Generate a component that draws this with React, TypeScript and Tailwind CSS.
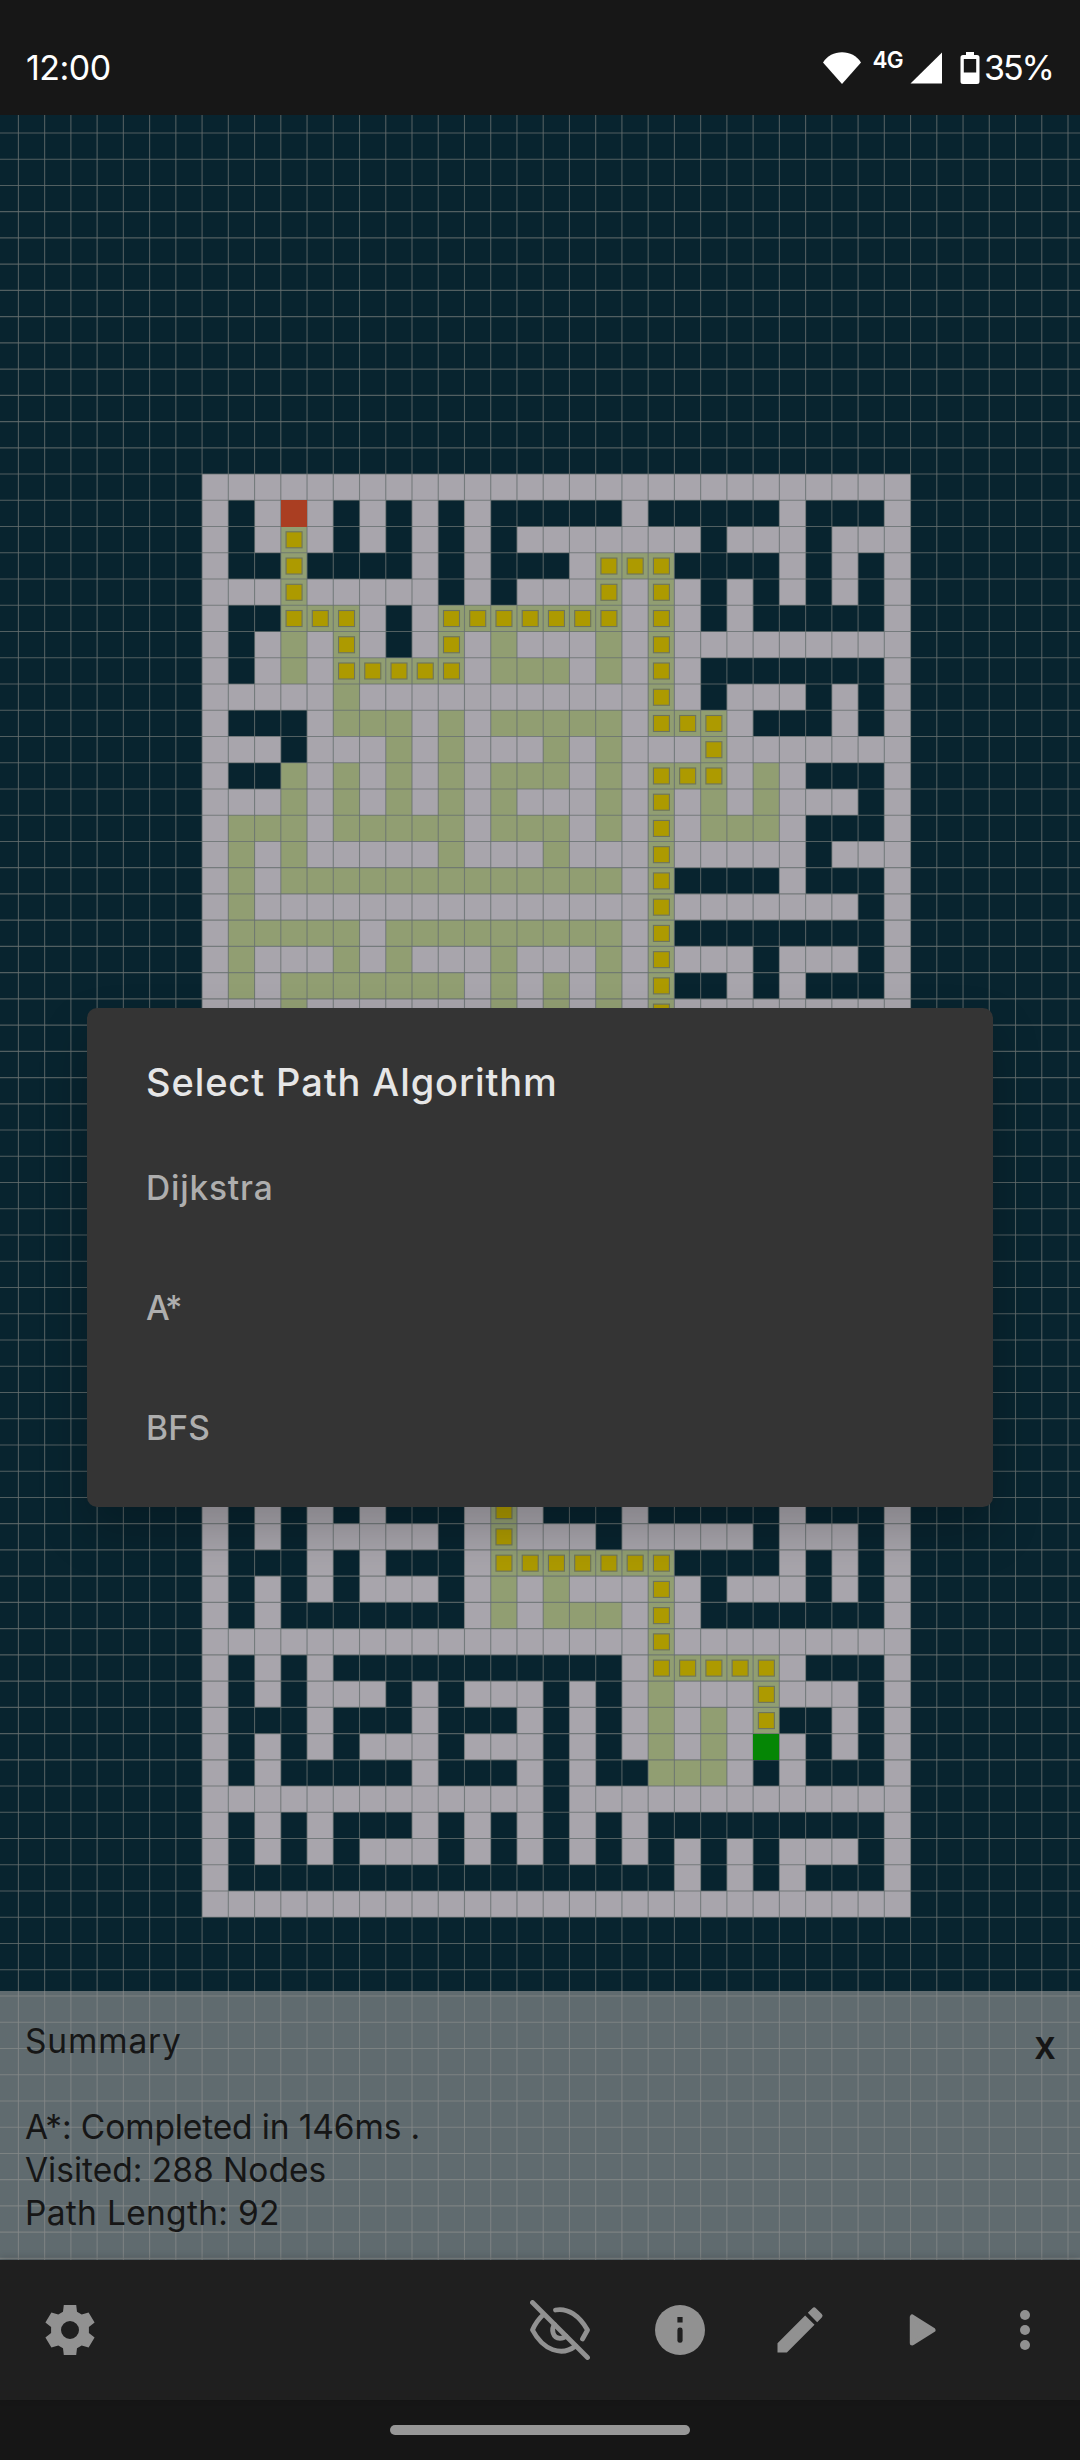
import { MdEdit } from "react-icons/md";

const CELL = 26.24;
const GRID_X = 18.4;
const GRID_Y = 132.95 - 115;
const MAZE_COL = 7;
const MAZE_ROW = 13;

// "#" wall, "." open, "g" visited, "p" path, "S" start, "E" end
const MAZE = [
  "###########################",
  "#.#S#.#.#.#.....#.....#...#",
  "#.#p#.#.#.#.#######.###.###",
  "#..p....#.#...#ppp....#.#.#",
  "###p#####.#.###p#p#.#.#.#.#",
  "#..ppp#.#ppppppp#p#.#.....#",
  "#.#g#p#.#p#g###g#p#########",
  "#.#g#ppppp#ggg#g#p#.......#",
  "#####g###########p#.###.#.#",
  "#...#ggg#g#ggggg#ppp#...#.#",
  "###.###g#g###g#g###p#######",
  "#..g#g#g#g#ggg#g#ppp#g#...#",
  "###g#g#g#g#g###g#p#g#g###.#",
  "#ggg#ggggg#ggg#g#p#ggg#...#",
  "#g#g#####g###g###p#####.###",
  "#g#ggggggggggggg#p....#...#",
  "#g###############p#######.#",
  "#ggggg#ggggggggg#p........#",
  "#g###g#g###g###g#p###.###.#",
  "#g#ggggggg#g#g#g#p..#.#...#",
  "###g#######g#g#g#p#########",
  ...Array<string>(18).fill("###########p###############"),
  "#.#.#.#...#p#...#.....#...#",
  "#.#.#####.#p###.#####.###.#",
  "#...#.#...#ppppppp....#.#.#",
  "#.#.#.###.#g#g###p#.###.#.#",
  "#.#.......#g#ggg#p#.......#",
  "#################p#########",
  "#.#.#...........#ppppp#...#",
  "#.#.###.#.###.#.#g###p###.#",
  "#...#...#...#.#.#g#g#p..#.#",
  "#.#.#.###.###.#.#g#g#E#.#.#",
  "#.#.....#...#.#..ggg#.#...#",
  "#############.#############",
  "#.#.#...#.#.#.#.#.........#",
  "#.#.#.###.#.#.#.#.#.#.###.#",
  "#.................#.#.#...#",
  "###########################",
];

const FILL: Record<string, string> = {
  "#": "#a8a5ac",
  g: "#919e72",
  p: "#919e72",
  S: "#aa3e22",
  E: "#058605",
};

const cells = MAZE.flatMap((row, r) =>
  [...row].map((kind, c) => ({
    kind,
    key: `${r}-${c}`,
    x: GRID_X + (MAZE_COL + c) * CELL,
    y: GRID_Y + (MAZE_ROW + r) * CELL,
  })),
).filter((cell) => cell.kind !== ".");

const isEndpoint = (kind: string) => kind === "S" || kind === "E";

function MazeCanvas() {
  return (
    <svg className="absolute inset-0 h-full w-full" viewBox="0 0 1080 2145">
      <g shapeRendering="crispEdges">
        {cells
          .filter((c) => !isEndpoint(c.kind))
          .map((c) => (
            <rect key={c.key} x={c.x} y={c.y} width={CELL} height={CELL} fill={FILL[c.kind]} />
          ))}
      </g>
      <g stroke="#667070" strokeOpacity={0.78} strokeWidth={1.1}>
        {Array.from({ length: 41 }, (_, i) => (
          <line key={`v${i}`} x1={GRID_X + i * CELL} x2={GRID_X + i * CELL} y1={0} y2={2145} />
        ))}
        {Array.from({ length: 82 }, (_, i) => (
          <line key={`h${i}`} x1={0} x2={1080} y1={GRID_Y + i * CELL} y2={GRID_Y + i * CELL} />
        ))}
      </g>
      <g fill="#ad9a00" stroke="#6d745f" strokeWidth={1.1}>
        {cells
          .filter((c) => c.kind === "p")
          .map((c) => (
            <rect key={c.key} x={c.x + CELL * 0.2} y={c.y + CELL * 0.2} width={CELL * 0.61} height={CELL * 0.61} />
          ))}
      </g>
      <g shapeRendering="crispEdges">
        {cells
          .filter((c) => isEndpoint(c.kind))
          .map((c) => (
            <rect key={c.key} x={c.x} y={c.y} width={CELL} height={CELL} fill={FILL[c.kind]} />
          ))}
      </g>
    </svg>
  );
}

function StatusBar() {
  return (
    <header className="flex h-[115px] shrink-0 items-center bg-[#171717] pt-[21px] pr-[27px] pl-[26px] text-[34px] leading-[40px] text-white">
      <span className="tracking-[-0.500px]">12:00</span>
      <svg className="ml-auto h-[34px] w-[40px]" viewBox="0 0 40 34" fill="#fff">
        <path d="M20 33 1 11.500C5.500 4.500 12 1.200 20 1.200S34.500 4.500 39 11.500Z" />
      </svg>
      <span className="-mt-[17px] ml-[10px] text-[22.500px] leading-[24px] font-semibold tracking-[-0.700px]">4G</span>
      <svg className="ml-[7px] h-[34px] w-[32px]" viewBox="0 0 32 34" fill="#fff">
        <path d="M32 1.500V32.500H.5Z" />
      </svg>
      <svg className="ml-[18px] h-[34px] w-[20px]" viewBox="0 0 20 34" fill="#fff" fillRule="evenodd">
        <path d="M6 1h8v3h3a2.500 2.500 0 0 1 2.500 2.500v24A2.500 2.500 0 0 1 17 33H3a2.500 2.500 0 0 1-2.500-2.500v-24A2.500 2.500 0 0 1 3 4h3ZM3.800 8v13.500h12.400V8Z" />
      </svg>
      <span className="ml-[4px] tracking-[-2px]">35%</span>
    </header>
  );
}

function Summary() {
  return (
    <section className="relative flex h-[269px] justify-between bg-[#989898]/61 pt-[29px] pr-[25px] pl-[25px] text-[33.500px] leading-[43px] text-[#161616]">
      <div className="flex flex-col">
        <h2 className="mb-[43px] tracking-[0.850px]">Summary</h2>
        <p className="tracking-[-0.120px]">A*: Completed in 146ms .</p>
        <p>Visited: 288 Nodes</p>
        <p className="tracking-[0.300px]">Path Length: 92</p>
      </div>
      <button className="mt-[6px] self-start font-['Noto_Sans',sans-serif] text-[30px] leading-[43px] font-bold">X</button>
    </section>
  );
}

function GearIcon() {
  return (
    <svg className="h-[60px] w-[60px]" viewBox="-30 -30 60 60" fill="currentColor" fillRule="evenodd">
      <path d="M-6.200-25H6.200L7-18.300 11.700-15.400 18.600-17.600 24.600-7.500 18.900-3V3L24.600 7.500 18.600 17.600 11.700 15.400 7 18.300 6.200 25H-6.200L-7 18.300-11.700 15.400-18.600 17.600-24.600 7.500-18.900 3V-3L-24.600-7.500-18.600-17.600-11.700-15.400-7-18.300ZM0-9A9 9 0 1 0 0 9 9 9 0 1 0 0-9Z" />
    </svg>
  );
}

function EyeOffIcon() {
  return (
    <svg
      className="h-[60px] w-[60px]"
      viewBox="-30 -30 60 60"
      fill="none"
      stroke="currentColor"
      strokeWidth={4.800}
      strokeLinecap="round"
      strokeLinejoin="round"
    >
      <path d="M-27.500-27.500 27.500 27.500" />
      <path d="M-4.500-20C8-22.500 19.500-14 27.500 0L22.500 9" />
      <path d="M-16.500-15.500C-21-11.500-25-6-27.500 0-17 20 1.500 27 15.500 16" />
      <path d="M-5.500-5.500C-9-1-7.500 8 0 8.300 2.500 8.300 4.500 7.500 6 6" />
    </svg>
  );
}

function InfoIcon() {
  return (
    <svg className="h-[60px] w-[60px]" viewBox="-30 -30 60 60">
      <circle r={25} fill="currentColor" />
      <rect x={-2.600} y={-13} width={5.200} height={5.500} fill="#1f1f1f" />
      <rect x={-2.600} y={-2.500} width={5.200} height={15.300} rx={2.400} fill="#1f1f1f" />
    </svg>
  );
}

function PlayIcon() {
  return (
    <svg className="h-[60px] w-[60px]" viewBox="0 0 60 60" fill="currentColor" stroke="currentColor" strokeWidth={5} strokeLinejoin="round">
      <path d="M22.300 17V43L43 30Z" />
    </svg>
  );
}

function MoreIcon() {
  return (
    <svg className="h-[60px] w-[60px]" viewBox="-30 -30 60 60" fill="currentColor">
      <circle cy={-15} r={5} />
      <circle r={5} />
      <circle cy={15} r={5} />
    </svg>
  );
}

function Toolbar() {
  return (
    <nav className="relative flex h-[140px] shrink-0 items-center bg-[#1f1f1f] pr-[25px] pl-[40px] text-[#919191] shadow-[0_-2px_8px_rgba(0,0,0,0.18)]">
      <button className="mr-auto"><GearIcon /></button>
      <div className="flex gap-[60px]">
        <button><EyeOffIcon /></button>
        <button><InfoIcon /></button>
        <button><MdEdit size={60} /></button>
        <button><PlayIcon /></button>
      </div>
      <button className="ml-[45px]"><MoreIcon /></button>
    </nav>
  );
}

function AlgorithmDialog() {
  return (
    <div
      role="dialog"
      className="absolute top-[1008px] left-[87px] h-[499px] w-[906px] rounded-[10px] bg-[#343434] px-[59px] shadow-[0_24px_48px_rgba(0,0,0,0.21)]"
    >
      <h1 className="flex h-[120px] items-center pt-[28px] text-[38px] font-medium tracking-[0.900px] text-[#e6e6e6]">
        Select Path Algorithm
      </h1>
      <ul className="text-[33.500px] font-medium text-[#aeaeae]">
        <li className="flex h-[120px] items-center tracking-[0.800px]">Dijkstra</li>
        <li className="flex h-[120px] items-center tracking-[-1.800px]">A*</li>
        <li className="flex h-[120px] items-center tracking-[0.200px]">BFS</li>
      </ul>
    </div>
  );
}

export default function App() {
  return (
    <div className="relative flex h-[2460px] w-[1080px] flex-col overflow-hidden font-['Inter',sans-serif]">
      <StatusBar />
      <main className="relative flex h-[2145px] shrink-0 flex-col justify-end bg-[#08242f]">
        <MazeCanvas />
        <Summary />
      </main>
      <Toolbar />
      <footer className="flex h-[60px] shrink-0 items-center justify-center bg-[#161616]">
        <div className="h-[10px] w-[300px] rounded-full bg-[#979797]" />
      </footer>
      <AlgorithmDialog />
    </div>
  );
}
